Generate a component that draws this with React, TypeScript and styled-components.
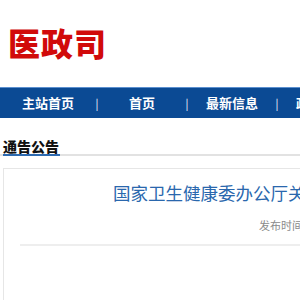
import React from "react";
import styled, { createGlobalStyle } from "styled-components";

const Global = createGlobalStyle`
  html, body { margin: 0; padding: 0; overflow: hidden; background: #fff; }
  body { font-family: "Noto Sans CJK SC", "Noto Sans", sans-serif; }
`;

const Page = styled.div`
  width: 1000px;
`;

const Header = styled.header`
  height: 87px;
  box-sizing: border-box;
  padding: 24px 0 0 8px;
`;

const Logo = styled.div`
  font-size: 32px;
  line-height: 36px;
  font-weight: 900;
  color: #d10a0a;
  letter-spacing: 1px;
`;

const Nav = styled.nav`
  height: 31px;
  box-sizing: border-box;
  background: #0b4a94;
  border-top: 1px solid #5b8fcf;
  display: flex;
  align-items: center;
  padding-left: 8px;
`;

const NavItem = styled.a<{ $w: number }>`
  width: ${(p) => p.$w}px;
  text-align: center;
  color: #fff;
  font-size: 13px;
  font-weight: 700;
  line-height: 30px;
  text-decoration: none;
`;

const Sep = styled.span`
  width: 18px;
  text-align: center;
  color: #fff;
  font-size: 11px;
  line-height: 30px;
`;

const SectionHead = styled.div`
  margin: 20px 0 0 0;
  padding-left: 3px;
  border-bottom: 2px solid #e2e2e2;
  display: flex;
`;

const SectionTitle = styled.h2`
  margin: 0 0 -2px 0;
  font-size: 14px;
  line-height: 16px;
  font-weight: 900;
  color: #111;
  border-bottom: 2px solid #2d6ab0;
  padding-right: 1px;
`;

const Card = styled.div`
  margin: 12px 0 0 3px;
  border: 1px solid #e6e6e6;
  height: 400px;
`;

const Title = styled.h1`
  margin: 0;
  padding: 12px 0 0 109px;
  font-size: 17.5px;
  line-height: 24px;
  font-weight: 400;
  color: #2a67ad;
  white-space: nowrap;
`;

const Meta = styled.div`
  padding: 12px 0 0 255px;
  font-size: 11px;
  line-height: 16px;
  color: #8a8a8a;
  white-space: nowrap;
`;

const Divider = styled.div`
  margin: 11px 0 0 16px;
  border-top: 2px solid #eeeeee;
`;

const items = ["主站首页", "首页", "最新信息", "政策文件"];

export default function App() {
  return (
    <Page>
      <Global />
      <Header>
        <Logo>医政司</Logo>
      </Header>
      <Nav>
        {items.map((t, i) => (
          <React.Fragment key={t}>
            {i > 0 && <Sep>|</Sep>}
            <NavItem href="#" $w={i === 0 ? 80 : 72}>
              {t}
            </NavItem>
          </React.Fragment>
        ))}
      </Nav>
      <SectionHead>
        <SectionTitle>通告公告</SectionTitle>
      </SectionHead>
      <Card>
        <Title>国家卫生健康委办公厅关于印发医疗机构相关工作方案的通知</Title>
        <Meta>发布时间：2024-01-01</Meta>
        <Divider />
      </Card>
    </Page>
  );
}
